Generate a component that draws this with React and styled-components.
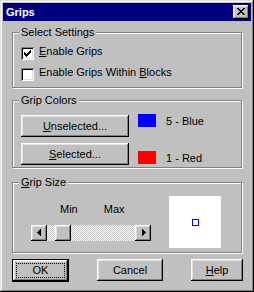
import React from 'react';
import styled, {createGlobalStyle} from 'styled-components';

const GlobalStyle = createGlobalStyle`
  body {
    margin: 0;
    background: #c0c0c0;
    font-family: 'Liberation Sans', Arial, sans-serif;
    font-size: 11px;
    color: #000;
  }
`;

const raised = `
  box-shadow: inset -1px -1px #000, inset 1px 1px #fff, inset -2px -2px #808080, inset 2px 2px #dfdfdf;
`;

function Grips() {
  return (
    <Window>
      <TitleBar>
        <Title>Grips</Title>
        <CloseButton>
          <svg width="8" height="7" viewBox="0 0 8 7" shapeRendering="crispEdges">
            <path
              fill="#000"
              d="M0 0h2v1H0z M6 0h2v1H6z M1 1h2v1H1z M5 1h2v1H5z M2 2h4v1H2z M3 3h2v1H3z M2 4h4v1H2z M1 5h2v1H1z M5 5h2v1H5z M0 6h2v1H0z M6 6h2v1H6z"
            />
          </svg>
        </CloseButton>
      </TitleBar>

      <Content>
        <Group $h={56} $mt={11} $pad="14px 8px 0">
          <Legend>Select Settings</Legend>
          <CheckRow>
            <CheckBox>
              <svg width="7" height="7" viewBox="0 0 7 7" shapeRendering="crispEdges">
                <path
                  fill="#000"
                  d="M6 0h1v3H6z M5 1h1v3H5z M4 2h1v3H4z M3 3h1v3H3z M2 4h1v3H2z M1 3h1v3H1z M0 2h1v3H0z"
                />
              </svg>
            </CheckBox>
            <CheckLabel>
              <u>E</u>nable Grips
            </CheckLabel>
          </CheckRow>
          <CheckRow>
            <CheckBox />
            <CheckLabel>
              Enable Grips Within <u>B</u>locks
            </CheckLabel>
          </CheckRow>
        </Group>

        <Group $h={68} $mt={12} $pad="14px 8px 0">
          <Legend>Grip Colors</Legend>
          <ColorRow>
            <Button $w={108}>
              <u>U</u>nselected...
            </Button>
            <Swatch $color="#0000ff" $top={-1} />
            <ColorName $top={0}>5 - Blue</ColorName>
          </ColorRow>
          <ColorRow>
            <Button $w={108}>
              <u>S</u>elected...
            </Button>
            <Swatch $color="#ff0000" $top={8} />
            <ColorName $top={9}>1 - Red</ColorName>
          </ColorRow>
        </Group>

        <Group $h={71} $mt={14} $pad="13px 18px 0">
          <Legend>
            <u>G</u>rip Size
          </Legend>
          <SizeRow>
            <SliderColumn>
              <Scale>
                <span>Min</span>
                <span>Max</span>
              </Scale>
              <ScrollBar>
                <ArrowButton $pl={6}>
                  <svg width="4" height="7" viewBox="0 0 4 7" shapeRendering="crispEdges">
                    <path fill="#000" d="M3 0h1v7H3z M2 1h1v5H2z M1 2h1v3H1z M0 3h1v1H0z" />
                  </svg>
                </ArrowButton>
                <Track>
                  <Thumb />
                </Track>
                <ArrowButton $pl={7}>
                  <svg width="4" height="7" viewBox="0 0 4 7" shapeRendering="crispEdges">
                    <path fill="#000" d="M0 0h1v7H0z M1 1h1v5H1z M2 2h1v3H2z M3 3h1v1H3z" />
                  </svg>
                </ArrowButton>
              </ScrollBar>
            </SliderColumn>
            <Preview>
              <GripBox />
            </Preview>
          </SizeRow>
        </Group>

        <ButtonRow>
          <Button $w={57} $default>
            <Focus>OK</Focus>
          </Button>
          <Button $w={66}>Cancel</Button>
          <Button $w={52}>
            <u>H</u>elp
          </Button>
        </ButtonRow>
      </Content>
    </Window>
  );
}

const Window = styled.div`
  box-sizing: border-box;
  width: 254px;
  height: 292px;
  padding: 3px;
  background: #c0c0c0;
  box-shadow: inset -1px -1px #000, inset 1px 1px #dfdfdf, inset -2px -2px #808080, inset 2px 2px #fff;
`;

const TitleBar = styled.div`
  height: 18px;
  background: #000080;
  display: flex;
  align-items: center;
  justify-content: space-between;
  padding: 0 2px 0 3px;
`;

const Title = styled.span`
  color: #fff;
  font-weight: bold;
  font-size: 11px;
  line-height: 13px;
`;

const CloseButton = styled.div`
  box-sizing: border-box;
  width: 16px;
  height: 14px;
  background: #c0c0c0;
  ${raised}
  display: flex;
  align-items: flex-start;
  padding: 3px 0 0 4px;

  svg {
    display: block;
  }
`;

const Content = styled.div`
  padding: 0 9px;
  display: flex;
  flex-direction: column;
`;

const Group = styled.div`
  position: relative;
  box-sizing: border-box;
  height: ${({$h}) => $h}px;
  margin-top: ${({$mt}) => $mt}px;
  padding: ${({$pad}) => $pad};
  border: 1px solid #808080;
  box-shadow: inset 1px 1px #fff, 1px 1px #fff;
`;

const Legend = styled.span`
  position: absolute;
  top: -7px;
  left: 6px;
  padding: 0 2px;
  background: #c0c0c0;
  line-height: 13px;
  white-space: nowrap;
`;

const CheckRow = styled.div`
  display: flex;
  align-items: flex-start;
  gap: 5px;
  height: 13px;

  & + & {
    margin-top: 8px;
  }
`;

const CheckBox = styled.div`
  box-sizing: border-box;
  width: 13px;
  height: 13px;
  flex-shrink: 0;
  background: #fff;
  box-shadow: inset 1px 1px #808080, inset -1px -1px #fff, inset 2px 2px #000, inset -2px -2px #dfdfdf;
  padding: 3px;

  svg {
    display: block;
  }
`;

const CheckLabel = styled.span`
  margin-top: -2px;
  line-height: 13px;
  white-space: nowrap;
`;

const ColorRow = styled.div`
  display: flex;
  align-items: flex-start;
  height: 22px;

  & + & {
    margin-top: 6px;
  }
`;

const Button = styled.div`
  box-sizing: border-box;
  width: ${({$w}) => $w}px;
  height: ${({$default}) => ($default ? 23 : 22)}px;
  flex-shrink: 0;
  display: flex;
  align-items: center;
  justify-content: center;
  background: #c0c0c0;
  line-height: 13px;
  white-space: nowrap;
  ${raised}
  ${({$default}) => ($default ? 'border: 1px solid #000; padding: 3px;' : '')}
`;

const Focus = styled.span`
  flex: 1;
  align-self: stretch;
  display: flex;
  align-items: center;
  justify-content: center;
  border: 1px dotted #000;
`;

const Swatch = styled.div`
  width: 18px;
  height: 13px;
  margin: ${({$top}) => $top}px 0 0 9px;
  background: ${({$color}) => $color};
  flex-shrink: 0;
`;

const ColorName = styled.span`
  margin: ${({$top}) => $top}px 0 0 10px;
  line-height: 13px;
  white-space: nowrap;
`;

const SizeRow = styled.div`
  display: flex;
  align-items: flex-start;
`;

const SliderColumn = styled.div`
  display: flex;
  flex-direction: column;
  margin-top: 7px;
`;

const Scale = styled.div`
  display: flex;
  gap: 26px;
  padding-left: 29px;
  line-height: 13px;
`;

const ScrollBar = styled.div`
  display: flex;
  width: 120px;
  height: 16px;
  margin-top: 9px;
`;

const ArrowButton = styled.div`
  box-sizing: border-box;
  width: 16px;
  height: 16px;
  flex-shrink: 0;
  background: #c0c0c0;
  ${raised}
  padding: 4px 0 0 ${({$pl}) => $pl}px;

  svg {
    display: block;
  }
`;

const Track = styled.div`
  flex: 1;
  display: flex;
  background-color: #c0c0c0;
  background-image: conic-gradient(#fff 25%, #c0c0c0 0 50%, #fff 0 75%, #c0c0c0 0);
  background-size: 2px 2px;
`;

const Thumb = styled.div`
  box-sizing: border-box;
  width: 16px;
  height: 16px;
  margin-left: 8px;
  background: #c0c0c0;
  ${raised}
`;

const Preview = styled.div`
  box-sizing: border-box;
  width: 52px;
  height: 52px;
  margin-left: 18px;
  padding: 23px 0 0 23px;
  background: #fff;
`;

const GripBox = styled.div`
  box-sizing: border-box;
  width: 7px;
  height: 7px;
  border: 1px solid #0000ff;
`;

const ButtonRow = styled.div`
  display: flex;
  gap: 28px;
  margin-top: 6px;
`;

export default function App() {
  return (
    <>
      <GlobalStyle />
      <Grips />
    </>
  );
}
